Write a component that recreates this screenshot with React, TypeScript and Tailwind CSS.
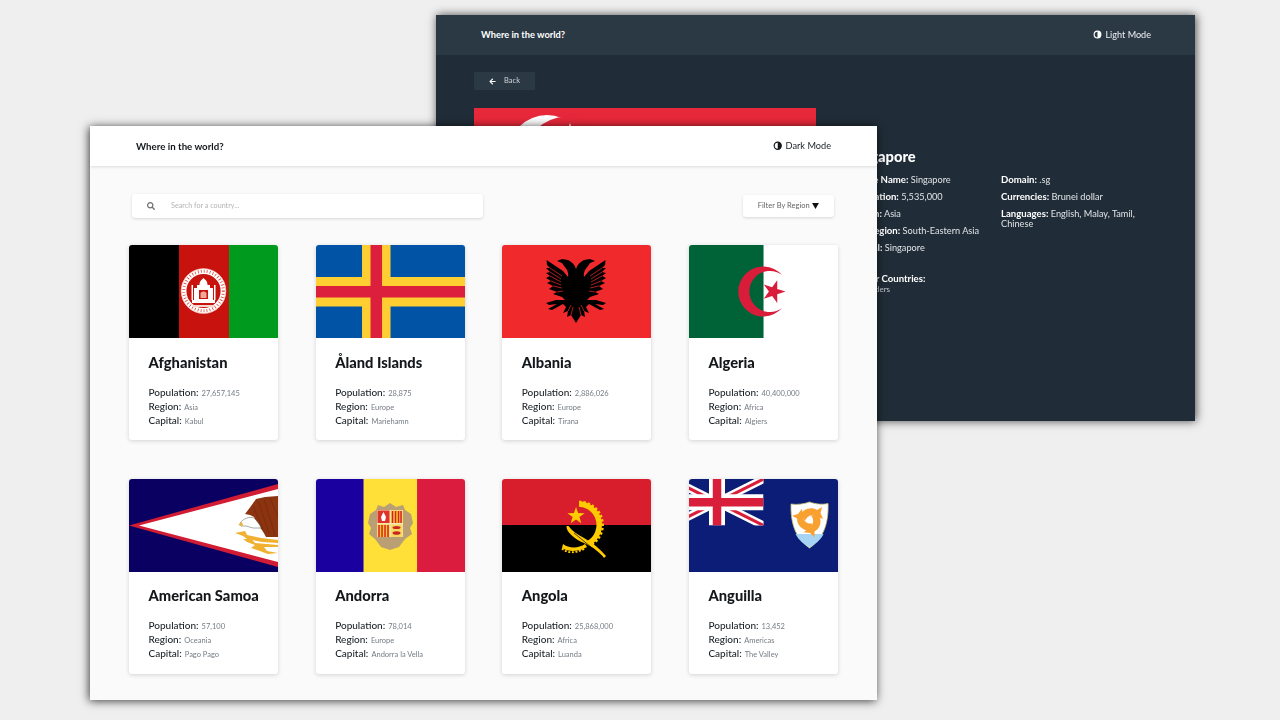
import { FaArrowLeft, FaSearch } from 'react-icons/fa';

const FONT = 'font-["Lato","Liberation_Sans",sans-serif]';

interface Country {
    name: string;
    population: string;
    region: string;
    capital: string;
}

const COUNTRIES: Country[] = [
    { name: 'Afghanistan', population: '27,657,145', region: 'Asia', capital: 'Kabul' },
    { name: 'Åland Islands', population: '28,875', region: 'Europe', capital: 'Mariehamn' },
    { name: 'Albania', population: '2,886,026', region: 'Europe', capital: 'Tirana' },
    { name: 'Algeria', population: '40,400,000', region: 'Africa', capital: 'Algiers' },
    { name: 'American Samoa', population: '57,100', region: 'Oceania', capital: 'Pago Pago' },
    { name: 'Andorra', population: '78,014', region: 'Europe', capital: 'Andorra la Vella' },
    { name: 'Angola', population: '25,868,000', region: 'Africa', capital: 'Luanda' },
    { name: 'Anguilla', population: '13,452', region: 'Americas', capital: 'The Valley' },
];

// right half of the albanian eagle, mirrored for the left one
const EAGLE_HALF =
    'M0 24C1 20 4 17 8 15L14 14L19 16L14 18L12 21C9 24 7 28 8 32L13 26L29.500 15L29 20L26 23L30 23L26 27L30 28L26 31L30 33L25 36L29 38L23 41L27 44L19 47L23 49L14 52L11 55L20 55L30 58L27 60L19 59L28 64L24 65L13 59L10 62L13 68L8 66L9 72L5 70L0 78Z';

const FEATHER_SLITS = 'M14 31L26 23M15 34L26 27M15 37L26 31M15 40L25 36M14 43L23 41M13 46L19 47M5 60L8 66M3 62L5 70';

function Eagle({ mirrored }: { mirrored?: boolean }) {
    return (
        <g transform={mirrored ? 'translate(74 0) scale(-1 1)' : 'translate(74 0)'}>
            <path d={EAGLE_HALF} fill="#000" />
            <path d={FEATHER_SLITS} fill="none" stroke="#f0292c" strokeWidth="0.7" />
        </g>
    );
}

function HalfIcon({ className }: { className: string }) {
    return (
        <svg viewBox="0 0 16 16" className={className} fill="currentColor">
            <path d="M8 1a7 7 0 1 1 0 14A7 7 0 0 1 8 1Zm0 2a5 5 0 0 0 0 10Z" />
        </svg>
    );
}

function Flag({ name }: { name: string }) {
    return (
        <svg viewBox="0 0 149 93" preserveAspectRatio="none" className="block w-full h-[93px]">
            {name === 'Afghanistan' && (
                <g>
                    <rect width="50" height="93" fill="#000" />
                    <rect x="50" width="50" height="93" fill="#c8120e" />
                    <rect x="100" width="49" height="93" fill="#009a1f" />
                    <circle cx="74.500" cy="46" r="19.800" fill="none" stroke="#fff" strokeWidth="5.400" />
                    <circle cx="74.500" cy="46" r="19.800" fill="none" stroke="#d8463c" strokeWidth="3" strokeDasharray="0.800 2.200" />
                    <circle cx="74.500" cy="46" r="22.300" fill="none" stroke="#f3b9ae" strokeWidth="0.700" />
                    <path d="M63 58H86V55H84V43H81V40H78.500C78.500 36 76.500 35 74.500 33C72.500 35 70.500 36 70.500 40H68V43H65V55H63Z" fill="#fff" />
                    <path d="M62.500 40H64V55H62.500ZM85 40H86.500V55H85Z" fill="#fff" />
                    <path d="M70 45H79V54H70Z" fill="#c8120e" />
                    <path d="M71.500 48C73 46 76 46 77.500 48V53H71.500Z" fill="#f0a898" />
                    <path d="M63 60H86L85 62H64Z" fill="#f7d6d0" />
                </g>
            )}
            {name === 'Åland Islands' && (
                <g>
                    <rect width="149" height="93" fill="#0053a5" />
                    <rect x="46" width="28.500" height="93" fill="#ffce33" />
                    <rect y="32" width="149" height="29.500" fill="#ffce33" />
                    <rect x="54.500" width="11.500" height="93" fill="#dc1f3c" />
                    <rect y="41" width="149" height="11.500" fill="#dc1f3c" />
                </g>
            )}
            {name === 'Albania' && (
                <g>
                    <rect width="149" height="93" fill="#f0292c" />
                    <Eagle mirrored />
                    <Eagle />
                </g>
            )}
            {name === 'Algeria' && (
                <g>
                    <rect width="149" height="93" fill="#fff" />
                    <rect width="74.500" height="93" fill="#006338" />
                    <path d="M93 30A25 25 0 1 0 93 63A20.500 20.500 0 1 1 93 30Z" fill="#d91c3a" />
                    <path d="M96.500 46.600L88.200 49.300L88.200 58L83.100 51L74.800 53.700L79.900 46.600L74.800 39.500L83.100 42.200L88.200 35.200L88.200 43.900Z" fill="#d91c3a" />
                </g>
            )}
            {name === 'American Samoa' && (
                <g>
                    <rect width="149" height="93" fill="#0a0062" />
                    <path d="M0 46.500L149 5V88Z" fill="#d21c34" />
                    <path d="M10 46.500L149 10V83Z" fill="#fff" />
                    <path d="M149 17L136 18L127 20L122 27L116 35L121 36L125 38C127 44 133 50 137 58L149 58Z" fill="#8c3310" />
                    <path d="M124 27L134 50M129 22L140 54M135 20L146 56M141 19L149 38" fill="none" stroke="#6b2a0c" strokeWidth="0.600" />
                    <path d="M111 44C114 40 120 37 125 39C128 42 131 46 132 49L124 49L117 47L112 47Z" fill="#fff" stroke="#555" strokeWidth="0.500" />
                    <path d="M109 46L113 43L114 47Z" fill="#f0b030" />
                    <path d="M106 54L116 52L118 56L132 59L149 61V64L133 63L118 60L114 57ZM114 60L122 60L126 64L149 66V68L135 68L138 72L149 74L139 75L128 71L122 69L126 66L118 63Z" fill="#f0b030" />
                </g>
            )}
            {name === 'Andorra' && (
                <g>
                    <rect width="48" height="93" fill="#1b00a0" />
                    <rect x="47.500" width="54" height="93" fill="#ffe038" />
                    <rect x="101" width="48" height="93" fill="#dc1c3e" />
                    <path d="M62 26L68 28L74 24L80 28L87 26L89 31L95 35L97 44L94 49L96 55L89 60L83 68L74 71L65 68L59 60L53 55L55 49L52 44L54 35L60 31Z" fill="#ba9f75" />
                    <rect x="61" y="31" width="26" height="27" fill="#f4e6b4" />
                    <rect x="61.500" y="31.500" width="12" height="12.500" fill="#e0342a" />
                    <path d="M67.500 33L70 38L69 42H66L65 38Z" fill="#fff" />
                    <rect x="75" y="31.500" width="11.500" height="12.500" fill="#f8cc30" />
                    <path d="M76.500 32V44M79.500 32V44M82.500 32V44M85 32V44" stroke="#d8202c" strokeWidth="1.500" />
                    <rect x="61.500" y="45.500" width="12" height="12.500" fill="#f8cc30" />
                    <path d="M63 46V58M66 46V58M69 46V58M72 46V58" stroke="#d8202c" strokeWidth="1.500" />
                    <rect x="75" y="45.500" width="11.500" height="12.500" fill="#f8d860" />
                    <ellipse cx="80.500" cy="48.500" rx="4" ry="1.500" fill="#c8261e" />
                    <ellipse cx="80.500" cy="54" rx="4" ry="1.800" fill="#c8261e" />
                </g>
            )}
            {name === 'Angola' && (
                <g>
                    <rect width="149" height="46.500" fill="#d81e2c" />
                    <rect y="46" width="149" height="47" fill="#000" />
                    <path d="M77 25A21 21 0 0 1 87 64" fill="none" stroke="#ffcb00" strokeWidth="5.500" />
                    <path d="M77 23A23 23 0 0 1 89 66" fill="none" stroke="#ffcb00" strokeWidth="2.500" strokeDasharray="2.400 2" />
                    <path d="M61 65C66 69 76 70 83 65L85 68C77 73 66 73 60 69Z" fill="#ffcb00" />
                    <path d="M60 68C65 73 74 73 83 68" fill="none" stroke="#ffcb00" strokeWidth="1.800" strokeDasharray="2 1.600" transform="translate(0 1.500)" />
                    <path d="M64.500 47C64 53 72 60 84 65C92 69 97 73 102 79L104 77C98 70 91 64 82 59C75 55 70 52 66.500 47Z" fill="#ffcb00" />
                    <path d="M72 54L101 78" stroke="#000" strokeWidth="0.700" />
                    <path d="M74 28L76.100 34.100L82.600 34.200L77.400 38.100L79.300 44.300L74 40.600L68.700 44.300L70.600 38.100L65.400 34.200L71.900 34.100Z" fill="#ffcb00" />
                </g>
            )}
            {name === 'Anguilla' && (
                <g>
                    <rect width="149" height="93" fill="#0c1d78" />
                    <svg x="0" y="0" width="74.500" height="46.500" viewBox="18.500 0 74.500 46.500">
                        <path d="M0 0L93 46.500M93 0L0 46.500" stroke="#fff" strokeWidth="8" />
                        <path d="M0 0L93 46.500M93 0L0 46.500" stroke="#d81e3a" strokeWidth="3" />
                        <path d="M46.500 0V46.500M0 23.250H93" stroke="#fff" strokeWidth="16" />
                        <path d="M46.500 0V46.500M0 23.250H93" stroke="#d81e3a" strokeWidth="8.500" />
                    </svg>
                    <path d="M102 25C108 26 115 25 120.500 23C126 25 133 26 139 24.500C139.500 42 136 58 120.500 69C105 58 101.500 42 102 25Z" fill="#fff" stroke="#c4c870" strokeWidth="0.800" />
                    <path d="M106.500 55H134.500C131.500 61 126.500 65 120.500 68.500C114.500 65 109.500 61 106.500 55Z" fill="#a8d4f4" />
                    {[0, 120, 240].map((angle) => (
                        <path
                            key={angle}
                            d="M110 38C113 30 122 27 128 31L133 28L131.500 34L134 40L128 37.500C124 35 118 36 116 42L113 38Z"
                            fill="#f8a030"
                            transform={`rotate(${angle} 120.500 41)`}
                        />
                    ))}
                </g>
            )}
        </svg>
    );
}

function Row({ label, value }: { label: string; value: string }) {
    return (
        <div className="flex items-baseline gap-[3px] h-[14px] leading-[14px] whitespace-nowrap">
            <span className="text-[10px] font-medium text-[#1c2227]">{label}</span>
            <span className="text-[7.5px] text-[#757c85]">{value}</span>
        </div>
    );
}

function CountryCard({ country }: { country: Country }) {
    return (
        <div className="bg-white rounded-[3px] overflow-hidden shadow-[0_1px_4px_rgba(0,0,0,0.16)]">
            <Flag name={country.name} />
            <div className="px-[19.5px] pt-[14.5px] pb-[13.5px]">
                <h2 className="text-[14.7px] leading-[18px] font-black text-[#14181b] whitespace-nowrap">{country.name}</h2>
                <div className="mt-[14px]">
                    <Row label="Population:" value={country.population} />
                    <Row label="Region:" value={country.region} />
                    <Row label="Capital:" value={country.capital} />
                </div>
            </div>
        </div>
    );
}

function DarkDetail({ label, value }: { label: string; value: string }) {
    return (
        <p className="text-[9.2px] leading-[10px] text-[#dfe3e6]">
            <span className="text-[9.6px] font-bold text-white">{label}</span> {value}
        </p>
    );
}

export default function App() {
    return (
        <div className={`relative w-[1280px] h-[720px] overflow-hidden bg-[#efefef] ${FONT}`}>
            {/* Dark detail page, behind */}
            <div className="absolute left-[436px] top-[15px] w-[759px] h-[406px] bg-[#202c37] shadow-[1px_0_9px_rgba(0,0,0,0.7)] blur-[0.35px]">
                <header className="h-[40px] bg-[#2b3945] flex items-center justify-between pl-[45px] pr-[44px]">
                    <span className="text-[9.3px] font-bold text-white">Where in the world?</span>
                    <span className="flex items-center gap-[3.5px] text-[9.1px] text-[#eef0f2]">
                        <HalfIcon className="w-[9px] h-[9px] text-white" />
                        Light Mode
                    </span>
                </header>
                <div className="flex pl-[38px]">
                    <div className="w-[342px] shrink-0 pt-[17px]">
                        <button className="w-[61px] h-[18px] bg-[#2b3945] rounded-[1px] flex items-center justify-center gap-[8px] text-[7.5px] text-[#cfd4d8]">
                            <FaArrowLeft className="w-[7px] h-[7px] text-white" />
                            Back
                        </button>
                        <svg viewBox="0 0 342 40" className="block mt-[18px] w-[342px] h-[40px]">
                            <rect width="342" height="40" fill="#e7283a" />
                            <circle cx="73" cy="45.600" r="38.600" fill="#fff" />
                            <circle cx="92" cy="50" r="41.200" fill="#e7283a" />
                            <path d="M96 15L97.200 18.600L101 18.600L98 20.800L99.100 24.400L96 22.200L92.900 24.400L94 20.800L91 18.600L94.800 18.600Z" fill="#fff" />
                        </svg>
                    </div>
                    <div className="ml-[34px] pt-[94px] flex-1">
                        <h1 className="text-[14.7px] leading-[14px] font-black text-white">Singapore</h1>
                        <div className="flex mt-[12px]">
                            <div className="w-[151px] shrink-0 flex flex-col gap-[7px]">
                                <DarkDetail label="Native Name:" value="Singapore" />
                                <DarkDetail label="Population:" value="5,535,000" />
                                <DarkDetail label="Region:" value="Asia" />
                                <DarkDetail label="Sub Region:" value="South-Eastern Asia" />
                                <DarkDetail label="Capital:" value="Singapore" />
                            </div>
                            <div className="w-[140px] flex flex-col gap-[7px]">
                                <DarkDetail label="Domain:" value=".sg" />
                                <DarkDetail label="Currencies:" value="Brunei dollar" />
                                <DarkDetail label="Languages:" value="English, Malay, Tamil, Chinese" />
                            </div>
                        </div>
                        <p className="mt-[21px] text-[9.6px] leading-[10px] font-bold text-white">Border Countries:</p>
                        <p className="mt-[1px] text-[8px] leading-[9px] text-[#c4cad0]">No Borders</p>
                    </div>
                </div>
            </div>

            {/* Light home page, in front */}
            <div className="absolute left-[90px] top-[126px] w-[787px] h-[574px] bg-[#fafafa] shadow-[-1px_1px_9px_rgba(0,0,0,0.75)] blur-[0.35px]">
                <header className="h-[40px] bg-white flex items-center justify-between pl-[46px] pr-[46px] shadow-[0_1px_3px_rgba(0,0,0,0.12)]">
                    <span className="text-[9.7px] font-bold text-[#14181b]">Where in the world?</span>
                    <span className="flex items-center gap-[3.5px] text-[9.2px] text-[#1c2227]">
                        <HalfIcon className="w-[9.5px] h-[9.5px] text-[#14181b]" />
                        Dark Mode
                    </span>
                </header>
                <div className="flex items-center justify-between pl-[42px] pr-[43px] mt-[28px]">
                    <div className="w-[351px] h-[24px] bg-white rounded-[3px] shadow-[0_1px_3px_rgba(0,0,0,0.14)] flex items-center pl-[15px] gap-[16px]">
                        <FaSearch className="w-[8px] h-[8px] text-[#6d6d6d]" />
                        <span className="text-[7.2px] text-[#b4b4b4]">Search for a country...</span>
                    </div>
                    <div className="w-[91px] h-[22px] bg-white rounded-[3px] shadow-[0_1px_3px_rgba(0,0,0,0.14)] flex items-center justify-center gap-[2.5px]">
                        <span className="text-[7.5px] text-[#666]">Filter By Region</span>
                        <svg viewBox="0 0 8 7" className="w-[7px] h-[6px]">
                            <path d="M0 0H8L4 7Z" fill="#111" />
                        </svg>
                    </div>
                </div>
                <div className="grid grid-cols-4 gap-x-[37.6px] gap-y-[38.8px] pl-[39px] pr-[39px] mt-[27px]">
                    {COUNTRIES.map((country) => (
                        <CountryCard key={country.name} country={country} />
                    ))}
                </div>
            </div>
        </div>
    );
}
